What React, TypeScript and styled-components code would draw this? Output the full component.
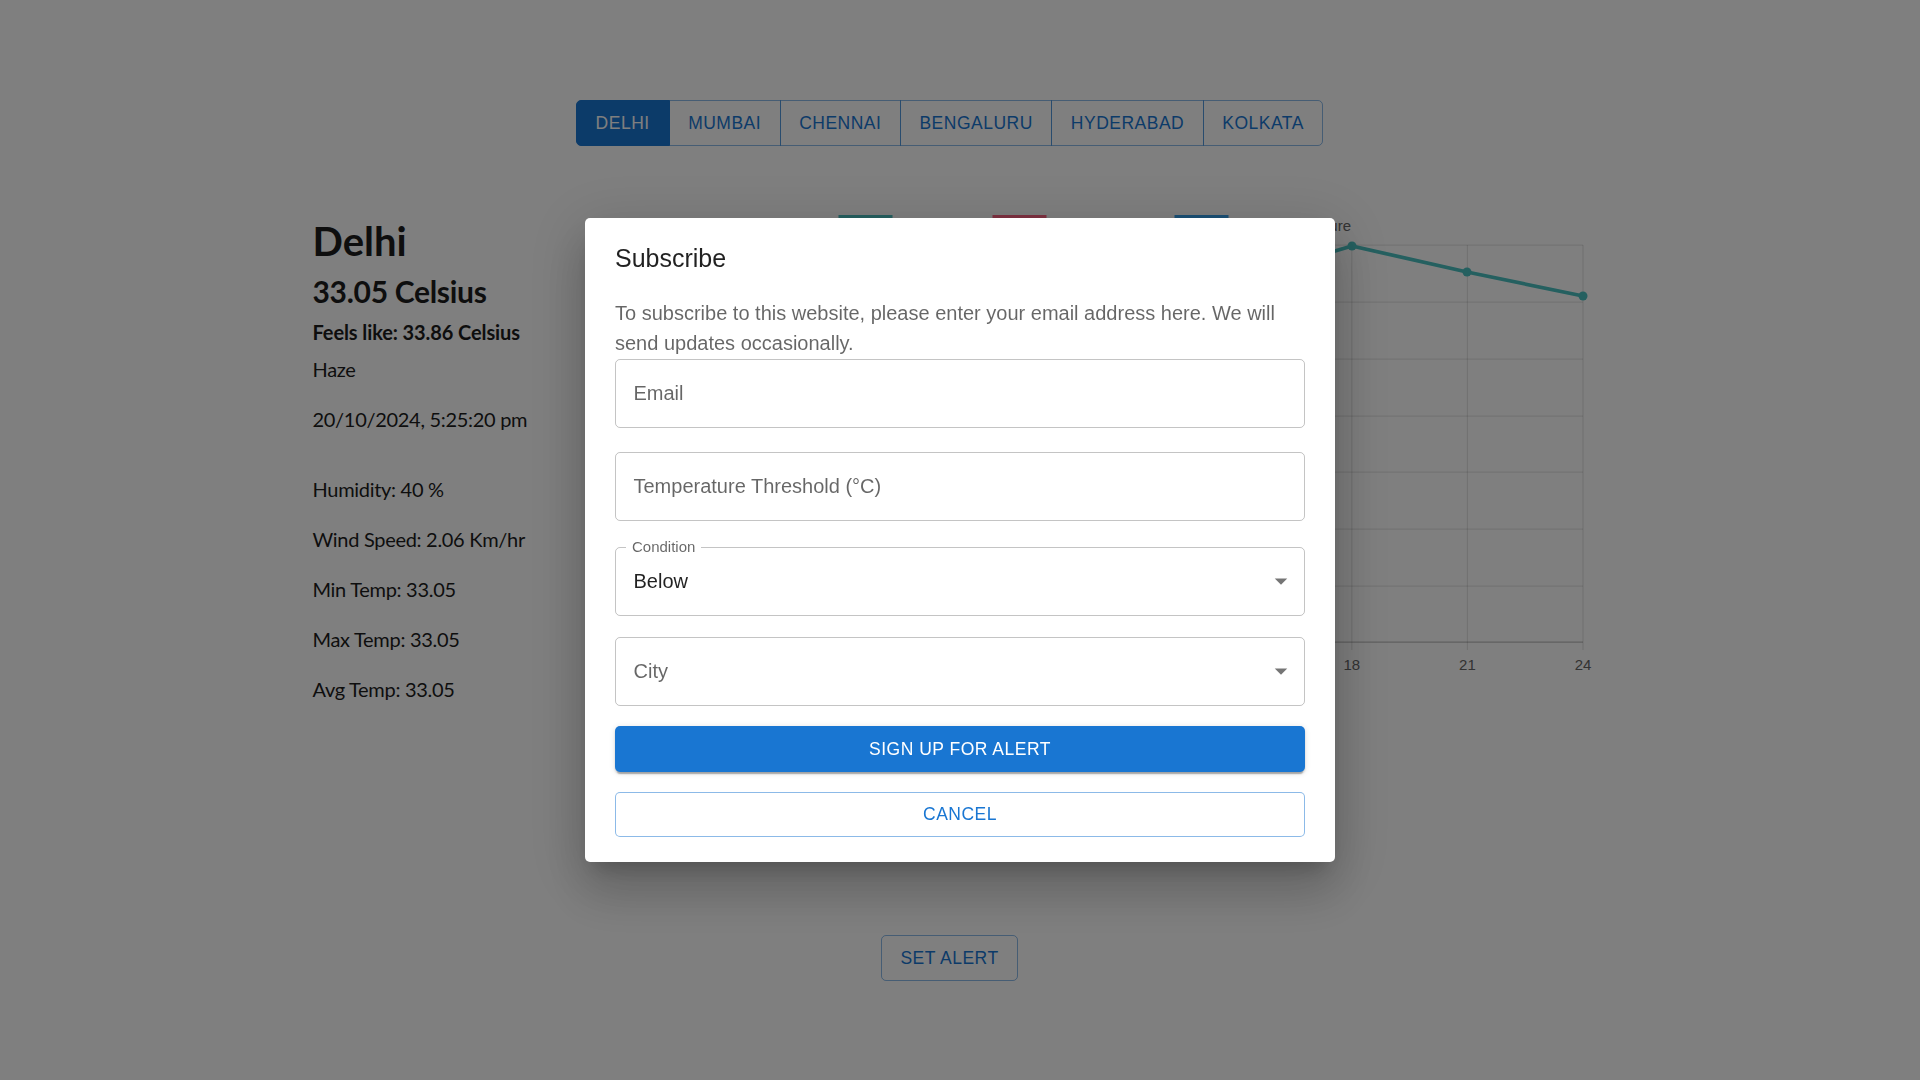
import React from 'react';
import styled, { createGlobalStyle } from 'styled-components';

const MUI_FONT = `"Liberation Sans", Arial, Helvetica, sans-serif`;

const GlobalStyle = createGlobalStyle`
  html, body { margin: 0; padding: 0; background: #ffffff; }
  body { font-family: Lato, "Segoe UI", sans-serif; overflow: hidden; color: #1c1c1c; }
  * { box-sizing: border-box; }
`;

const Page = styled.div`
  min-height: 1080px;
  padding: 100px 21px 0 0;
  display: flex;
  flex-direction: column;
  align-items: center;
`;

const CityTabs = styled.div`
  display: flex;
  height: 46px;
`;

const CityTab = styled.button<{ $active?: boolean }>`
  font-family: ${MUI_FONT};
  font-size: 17.5px;
  font-weight: 500;
  letter-spacing: 0.5px;
  text-transform: uppercase;
  height: 46px;
  padding: 0 ${(p) => (p.$active ? 19 : 18.5)}px;
  border: 1px solid ${(p) => (p.$active ? '#1976d2' : 'rgba(25,118,210,0.5)')};
  background: ${(p) => (p.$active ? '#1976d2' : 'transparent')};
  color: ${(p) => (p.$active ? '#ffffff' : '#1976d2')};
  border-radius: 0;
  margin-left: -1px;
  cursor: pointer;
  &:first-child {
    margin-left: 0;
    border-radius: 5px 0 0 5px;
  }
  &:last-child {
    border-radius: 0 5px 5px 0;
  }
`;

const ContentRow = styled.div`
  margin-top: 59px;
  width: 1277px;
  display: flex;
  align-items: flex-start;
`;

const InfoPanel = styled.div`
  width: 300px;
  padding-left: 1.5px;
  display: flex;
  flex-direction: column;
  letter-spacing: -0.3px;
`;

const CityName = styled.h1`
  margin: 11.5px 0 0;
  font-size: 40px;
  line-height: 48px;
  font-weight: 700;
  letter-spacing: 0;
`;

const CurrentTemp = styled.h2`
  margin: 8px 0 0;
  font-size: 30px;
  line-height: 36px;
  font-weight: 700;
`;

const FeelsLike = styled.h4`
  margin: 11px 0 0;
  font-size: 20px;
  line-height: 24px;
  font-weight: 700;
  letter-spacing: -0.1px;
`;

const InfoLine = styled.p<{ $gap: number }>`
  margin: ${(p) => p.$gap}px 0 0;
  font-size: 20px;
  line-height: 24px;
  font-weight: 400;
  white-space: nowrap;
`;

const ChartSvg = styled.svg`
  display: block;
  width: 977px;
  height: 495px;
  overflow: visible;
  font-family: ${MUI_FONT};
`;

const SetAlertButton = styled.button`
  margin-top: 234.5px;
  height: 46px;
  padding: 0 18.75px;
  font-family: ${MUI_FONT};
  font-size: 17.5px;
  font-weight: 500;
  letter-spacing: 0.5px;
  text-transform: uppercase;
  color: #1976d2;
  background: transparent;
  border: 1px solid rgba(25, 118, 210, 0.5);
  border-radius: 5px;
`;

const Backdrop = styled.div`
  position: fixed;
  inset: 0;
  background: rgba(0, 0, 0, 0.5);
  display: flex;
  align-items: center;
  justify-content: center;
`;

const Dialog = styled.div`
  width: 750px;
  background: #ffffff;
  border-radius: 5px;
  font-family: ${MUI_FONT};
  display: flex;
  flex-direction: column;
  box-shadow: 0 14px 19px -9px rgba(0, 0, 0, 0.2), 0 30px 48px 4px rgba(0, 0, 0, 0.14),
    0 11px 58px 10px rgba(0, 0, 0, 0.12);
`;

const DialogTitle = styled.h2`
  margin: 0;
  padding: 20px 30px;
  font-size: 25px;
  line-height: 40px;
  font-weight: 500;
  color: rgba(0, 0, 0, 0.87);
`;

const DialogBody = styled.div`
  padding: 0 30px 25px;
  display: flex;
  flex-direction: column;
`;

const DialogText = styled.p`
  margin: 0;
  font-size: 20px;
  line-height: 30px;
  color: rgba(0, 0, 0, 0.6);
`;

const Field = styled.div<{ $mt: number; $select?: boolean }>`
  position: relative;
  margin-top: ${(p) => p.$mt}px;
  height: 69px;
  border: 1px solid rgba(0, 0, 0, 0.23);
  border-radius: 5px;
  display: flex;
  align-items: center;
  padding: 0 ${(p) => (p.$select ? 8 : 17.5)}px 1px 17.5px;
`;

const FieldValue = styled.span<{ $empty?: boolean }>`
  font-size: 20px;
  line-height: 28px;
  color: ${(p) => (p.$empty ? 'rgba(0,0,0,0.6)' : 'rgba(0,0,0,0.87)')};
`;

const FloatingLabel = styled.span`
  position: absolute;
  top: -9.5px;
  left: 10px;
  padding: 0 6px;
  background: #ffffff;
  font-size: 15px;
  line-height: 15px;
  color: rgba(0, 0, 0, 0.6);
`;

const DropIcon = styled.svg`
  width: 30px;
  height: 30px;
  margin-left: auto;
  fill: rgba(0, 0, 0, 0.54);
`;

const PrimaryButton = styled.button`
  margin-top: 20px;
  height: 46px;
  border: none;
  border-radius: 5px;
  background: #1976d2;
  color: #ffffff;
  font-family: ${MUI_FONT};
  font-size: 17.5px;
  font-weight: 500;
  letter-spacing: 0.5px;
  text-transform: uppercase;
  box-shadow: 0 4px 1px -2px rgba(0, 0, 0, 0.2), 0 2px 2px 0 rgba(0, 0, 0, 0.14),
    0 1px 6px 0 rgba(0, 0, 0, 0.12);
`;

const SecondaryButton = styled.button`
  margin-top: 20px;
  height: 45px;
  border: 1px solid rgba(25, 118, 210, 0.5);
  border-radius: 5px;
  background: #ffffff;
  color: #1976d2;
  font-family: ${MUI_FONT};
  font-size: 17.5px;
  font-weight: 500;
  letter-spacing: 0.5px;
  text-transform: uppercase;
`;

const cities = ['Delhi', 'Mumbai', 'Chennai', 'Bengaluru', 'Hyderabad', 'Kolkata'];

const gridYs = [245, 302, 359, 416, 472, 529, 586, 642];
const xStep = 115.6;
const xRight = 1583;
const xTicks = Array.from({ length: 9 }, (_, i) => ({ x: xRight - (8 - i) * xStep, label: String(i * 3) }));
const tempPoints: [number, number][] = [
  [xRight - 8 * xStep, 330],
  [xRight - 7 * xStep, 318],
  [xRight - 6 * xStep, 300],
  [xRight - 5 * xStep, 284],
  [xRight - 4 * xStep, 276],
  [xRight - 3 * xStep, 280],
  [1352, 246],
  [1467, 272],
  [1583, 296],
];
const yLabels = ['34', '33', '32', '31', '30', '29', '28', '27'];

function ArrowDrop() {
  return (
    <DropIcon viewBox="0 0 24 24">
      <path d="M7 10l5 5 5-5z" />
    </DropIcon>
  );
}

function Chart() {
  return (
    <ChartSvg viewBox="611 205 977 495">
      <rect x={840} y={216.5} width={51} height={14} fill="rgba(75,192,192,0.2)" stroke="rgb(75,192,192)" strokeWidth={3} />
      <text x={904} y={231} fontSize={15} fill="#666">Temperature</text>
      <rect x={994} y={216.5} width={51} height={14} fill="rgba(255,99,132,0.2)" stroke="rgb(255,99,132)" strokeWidth={3} />
      <text x={1058} y={231} fontSize={15} fill="#666">Feels Like</text>
      <rect x={1176} y={216.5} width={51} height={14} fill="rgba(54,162,235,0.2)" stroke="rgb(54,162,235)" strokeWidth={3} />
      <text x={1351} y={231} fontSize={15} fill="#666" textAnchor="end">Avg Temperature</text>
      {gridYs.map((y, i) => (
        <line key={`h${y}`} x1={xTicks[0].x - 10} x2={xRight} y1={y} y2={y} stroke={i === gridYs.length - 1 ? 'rgba(0,0,0,0.25)' : 'rgba(0,0,0,0.1)'} strokeWidth={1.25} />
      ))}
      {gridYs.map((y, i) => (
        <text key={`yl${y}`} x={xTicks[0].x - 14} y={y + 5} fontSize={15} fill="#666" textAnchor="end">{yLabels[i]}</text>
      ))}
      {xTicks.map((t, i) => (
        <line key={`v${t.label}`} x1={t.x} x2={t.x} y1={245} y2={650} stroke={i === 0 ? 'rgba(0,0,0,0.25)' : 'rgba(0,0,0,0.1)'} strokeWidth={1.25} />
      ))}
      {xTicks.map((t) => (
        <text key={`xl${t.label}`} x={t.x} y={670} fontSize={15} fill="#666" textAnchor="middle">{t.label}</text>
      ))}
      <polyline
        points={tempPoints.map((p) => p.join(',')).join(' ')}
        fill="none"
        stroke="rgb(75,192,192)"
        strokeWidth={3.75}
        strokeLinejoin="round"
      />
      {tempPoints.map(([x, y]) => (
        <circle key={`p${x}`} cx={x} cy={y} r={4.5} fill="rgb(75,192,192)" />
      ))}
    </ChartSvg>
  );
}

export default function App() {
  return (
    <>
      <GlobalStyle />
      <Page>
        <CityTabs>
          {cities.map((c, i) => (
            <CityTab key={c} $active={i === 0}>{c}</CityTab>
          ))}
        </CityTabs>
        <ContentRow>
          <InfoPanel>
            <CityName>Delhi</CityName>
            <CurrentTemp>33.05 Celsius</CurrentTemp>
            <FeelsLike>Feels like: 33.86 Celsius</FeelsLike>
            <InfoLine $gap={13}>Haze</InfoLine>
            <InfoLine $gap={26.5}>20/10/2024, 5:25:20 pm</InfoLine>
            <InfoLine $gap={45.5}>Humidity: 40 %</InfoLine>
            <InfoLine $gap={26}>Wind Speed: 2.06 Km/hr</InfoLine>
            <InfoLine $gap={26}>Min Temp: 33.05</InfoLine>
            <InfoLine $gap={26}>Max Temp: 33.05</InfoLine>
            <InfoLine $gap={26}>Avg Temp: 33.05</InfoLine>
          </InfoPanel>
          <Chart />
        </ContentRow>
        <SetAlertButton>Set Alert</SetAlertButton>
      </Page>
      <Backdrop>
        <Dialog>
          <DialogTitle>Subscribe</DialogTitle>
          <DialogBody>
            <DialogText>
              To subscribe to this website, please enter your email address here. We will send updates occasionally.
            </DialogText>
            <Field $mt={1}>
              <FieldValue $empty>Email</FieldValue>
            </Field>
            <Field $mt={24}>
              <FieldValue $empty>Temperature Threshold (°C)</FieldValue>
            </Field>
            <Field $mt={26} $select>
              <FloatingLabel>Condition</FloatingLabel>
              <FieldValue>Below</FieldValue>
              <ArrowDrop />
            </Field>
            <Field $mt={21} $select>
              <FieldValue $empty>City</FieldValue>
              <ArrowDrop />
            </Field>
            <PrimaryButton>Sign up for alert</PrimaryButton>
            <SecondaryButton>Cancel</SecondaryButton>
          </DialogBody>
        </Dialog>
      </Backdrop>
    </>
  );
}
